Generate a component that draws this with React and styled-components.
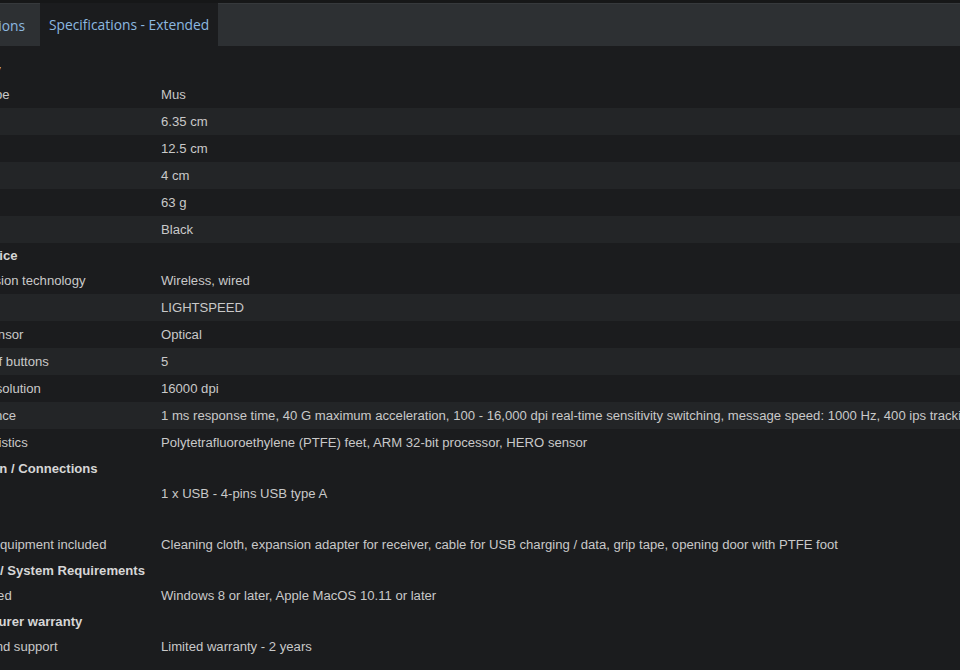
import styled, { createGlobalStyle } from "styled-components";

const GlobalStyle = createGlobalStyle`
  html, body {
    margin: 0;
    padding: 0;
    background-color: #1b1c1e;
    overflow: hidden;
  }
  body {
    font-family: "Liberation Sans", Arial, sans-serif;
  }
`;

const Page = styled.div`
  margin-left: -67px;
  width: 1200px;
  min-height: 670px;
  background-color: #1b1c1e;
  border-top: 3px solid #161718;
`;

const TabBar = styled.div`
  display: flex;
  height: 43px;
  margin-left: -5px;
  background-color: #2d3033;
  border-top: 1px solid #36393c;
  box-sizing: border-box;
`;

const Tab = styled.div`
  display: flex;
  align-items: center;
  padding: 0 9px;
  margin-right: 6px;
  font-family: "Open Sans", sans-serif;
  font-size: 13.8px;
  color: #8cb8e0;
  white-space: nowrap;
  background-color: ${(p) => (p.$active ? "#1b1c1e" : "transparent")};
  margin-top: ${(p) => (p.$active ? "-1px" : "0")};
`;

const Table = styled.div`
  margin-top: 11px;
  font-size: 13.12px;
  color: #c9c9c9;
  white-space: nowrap;
`;

const Group = styled.div`
  display: flex;
  flex-direction: column;
`;

const GroupTitle = styled.div`
  height: 24px;
  display: flex;
  align-items: center;
  padding: 0 8px;
  font-weight: bold;
  color: #d6d6d6;
`;

const Rows = styled.div`
  display: flex;
  flex-direction: column;
  & > div:nth-child(even) {
    background-color: #232527;
  }
`;

const Row = styled.div`
  display: grid;
  grid-template-columns: 220px 1fr;
  height: 27px;
  align-items: center;
`;

const Cell = styled.div`
  padding: 0 8px;
`;

const specs = [
  {
    title: "Generally",
    rows: [
      ["Device type", "Mus"],
      ["Width", "6.35 cm"],
      ["Depth", "12.5 cm"],
      ["Height", "4 cm"],
      ["Weight", "63 g"],
      ["Colour", "Black"],
    ],
  },
  {
    title: "Input device",
    rows: [
      ["Transmission technology", "Wireless, wired"],
      ["Interface", "LIGHTSPEED"],
      ["Motion sensor", "Optical"],
      ["Number of buttons", "5"],
      ["Motion resolution", "16000 dpi"],
      [
        "Performance",
        "1 ms response time, 40 G maximum acceleration, 100 - 16,000 dpi real-time sensitivity switching, message speed: 1000 Hz, 400 ips tracking",
      ],
      [
        "Characteristics",
        "Polytetrafluoroethylene (PTFE) feet, ARM 32-bit processor, HERO sensor",
      ],
    ],
  },
  {
    title: "Expansion / Connections",
    rows: [["Interface", "1 x USB - 4-pins USB type A"]],
  },
  {
    title: "Various",
    rows: [
      [
        "Bundled equipment included",
        "Cleaning cloth, expansion adapter for receiver, cable for USB charging / data, grip tape, opening door with PTFE foot",
      ],
    ],
  },
  {
    title: "Software / System Requirements",
    rows: [["OS required", "Windows 8 or later, Apple MacOS 10.11 or later"]],
  },
  {
    title: "Manufacturer warranty",
    rows: [["Service and support", "Limited warranty - 2 years"]],
  },
];

export default function App() {
  return (
    <>
      <GlobalStyle />
      <Page>
        <TabBar>
          <Tab>Specifications</Tab>
          <Tab $active>Specifications - Extended</Tab>
        </TabBar>
        <Table>
          {specs.map((group) => (
            <Group key={group.title}>
              <GroupTitle>{group.title}</GroupTitle>
              <Rows>
                {group.rows.map(([label, value]) => (
                  <Row key={label}>
                    <Cell>{label}</Cell>
                    <Cell>{value}</Cell>
                  </Row>
                ))}
              </Rows>
            </Group>
          ))}
        </Table>
      </Page>
    </>
  );
}
